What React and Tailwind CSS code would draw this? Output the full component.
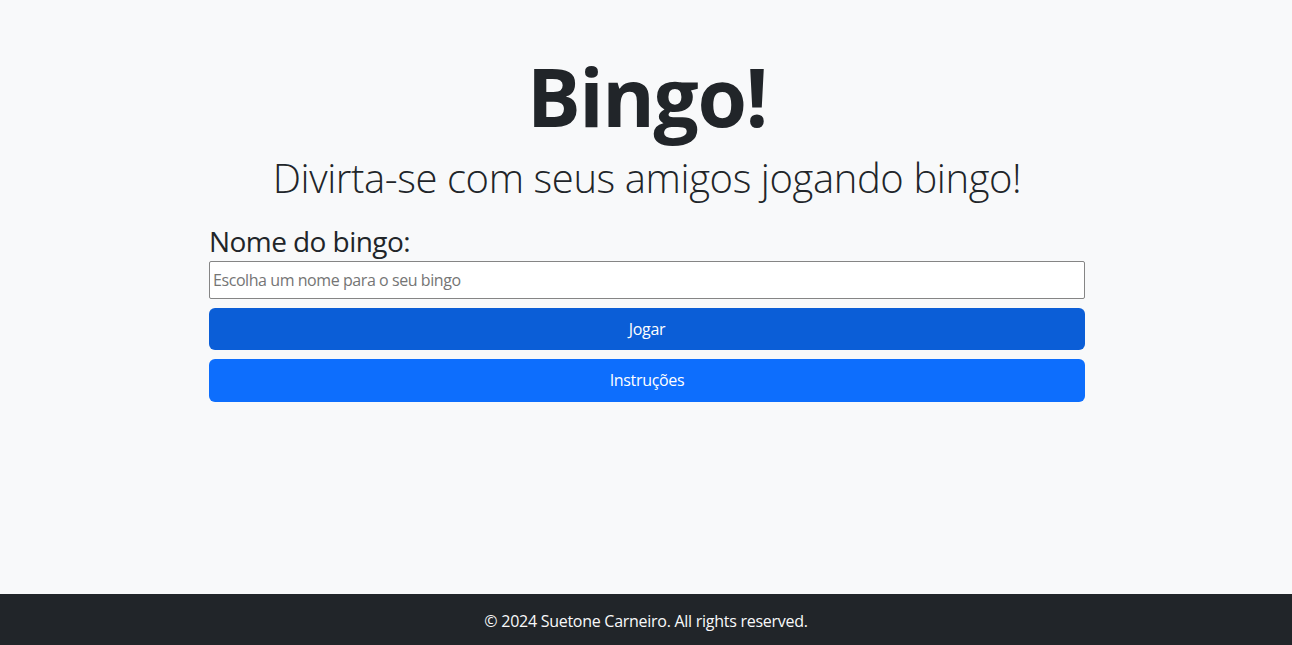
export default function App() {
  return (
    <div
      className="flex min-h-screen flex-col bg-[#f8f9fa] text-[#212529]"
      style={{ fontFamily: '"Open Sans", "Noto Sans", sans-serif' }}
    >
      <main className="flex-1">
        <div className="mx-auto w-[876px] translate-x-[1px] pt-[48px]">
          <h1 className="text-center text-[80px] font-bold leading-[1.2] tracking-[-0.017em]">Bingo!</h1>
          <p className="mt-[10px] text-center text-[40px] font-light leading-[1.2] tracking-[-0.01em]">
            Divirta-se com seus amigos jogando bingo!
          </p>
          <form className="mt-[23px] flex flex-col" onSubmit={(e) => e.preventDefault()}>
            <label htmlFor="bingo-name" className="text-[28px] leading-[1.2] tracking-[-0.02em]">
              Nome do bingo:
            </label>
            <input
              id="bingo-name"
              type="text"
              placeholder="Escolha um nome para o seu bingo"
              className="mt-[2px] h-[38px] w-full rounded-[2px] border border-[#858585] bg-white px-[3px] text-[16px] tracking-[-0.027em] outline-none placeholder:text-[#757575]"
            />
            <button
              type="submit"
              className="mt-[9px] h-[42px] w-full rounded-[6px] bg-[#0b5ed7] text-[16px] tracking-[-0.02em] text-white"
            >
              Jogar
            </button>
            <button
              type="button"
              className="mt-[9px] h-[43px] w-full rounded-[6px] bg-[#0d6efd] text-[16px] tracking-[-0.02em] text-white"
            >
              Instruções
            </button>
          </form>
        </div>
      </main>
      <footer className="flex h-[51px] items-center justify-center bg-[#212529] pt-[3px] text-[16px] tracking-[-0.017em] text-[#f8f9fa]">
        © 2024 Suetone Carneiro. All rights reserved.
      </footer>
    </div>
  );
}
